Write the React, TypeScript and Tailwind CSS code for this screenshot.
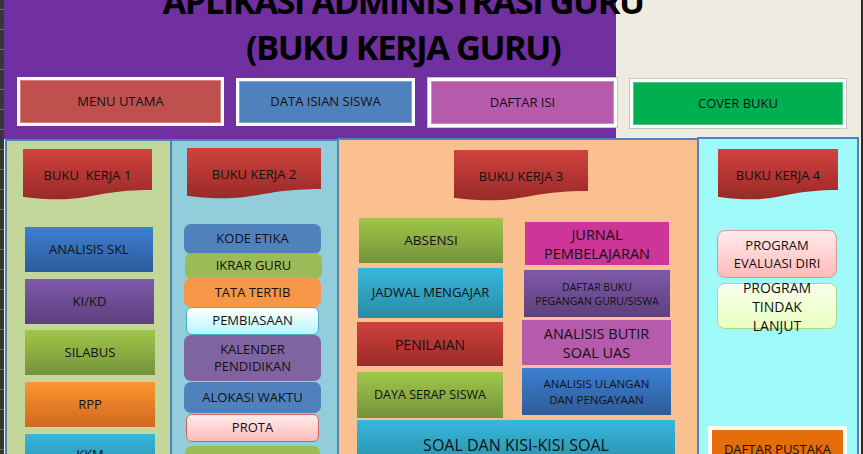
import React, { useId } from "react";

const fills = {
	blue: "bg-linear-to-b from-[#3d80d2] to-[#2c5c9a]",
	purple: "bg-linear-to-b from-[#8059ab] to-[#5c407c]",
	green: "bg-linear-to-b from-[#a0c747] to-[#75923b]",
	orange: "bg-linear-to-b from-[#ff9632] to-[#cf681e]",
	cyan: "bg-linear-to-b from-[#36b8dd] to-[#2a8ba5]",
	red: "bg-linear-to-b from-[#d0413d] to-[#9a2b29]",
};

type Fill = keyof typeof fills;

const Tile: React.FC<{ fill?: Fill; className: string; children: React.ReactNode }> = ({ fill, className, children }) => (
	<div
		className={`flex shrink-0 items-center justify-center text-center whitespace-pre-line ${fill ? fills[fill] : ""} ${className}`}
	>
		{children}
	</div>
);

// flowchart "document" shape used for the BUKU KERJA headings
const Banner: React.FC<{ label: string; className: string }> = ({ label, className }) => {
	const gid = "g" + useId().replace(/[^a-zA-Z0-9]/g, "");
	return (
		<div className={`relative flex h-[51px] shrink-0 items-center justify-center pt-[2px] text-[13px] ${className}`}>
			<svg className="absolute inset-0 h-full w-full" viewBox="0 0 100 100" preserveAspectRatio="none">
				<defs>
					<linearGradient id={gid} x1="0" y1="0" x2="0" y2="1">
						<stop offset="0" stopColor="#d1423e" />
						<stop offset="1" stopColor="#982a28" />
					</linearGradient>
				</defs>
				<path d="M0 0H100V80.2C50 80.2 50 110.7 0 93.4Z" fill={`url(#${gid})`} />
			</svg>
			<span className="relative whitespace-pre">{label}</span>
		</div>
	);
};

const App: React.FC = () => {
	return (
		<div className="flex h-[454px] w-[863px] overflow-hidden bg-[#eeece1] font-['Open_Sans',sans-serif] text-[#111]">
			<div className="h-full w-[4px] shrink-0 bg-[repeating-linear-gradient(to_bottom,#363636_0px,#363636_9px,#6b6b6b_9px,#6b6b6b_10px,#363636_10px,#363636_20px)]" />

			<div className="flex w-[857px] shrink-0 flex-col">
				<header className="flex h-[139px] shrink-0 flex-col bg-[linear-gradient(to_right,#7030a0_612px,#eeece1_612px)]">
					<h1 className="-mt-[22px] w-[798px] text-center text-[34.5px] leading-[46px] font-bold tracking-[-1.5px] text-black">
						APLIKASI ADMINISTRASI GURU
						<br />
						(BUKU KERJA GURU)
					</h1>
					<div className="mt-[7px] flex items-start pl-[13px] text-[13px]">
						<div className="h-[49px] w-[207px] border-[3px] border-white">
							<div className="flex h-full items-center justify-center border border-white/30 bg-[#c0504d]">MENU UTAMA</div>
						</div>
						<div className="mt-[1px] ml-[12px] h-[48px] w-[179px] border-[3px] border-white">
							<div className="flex h-full items-center justify-center border border-white/30 bg-[#4f81bd]">DATA ISIAN SISWA</div>
						</div>
						<div className="mt-[1px] ml-[13px] h-[49px] w-[189px] border-[3px] border-white outline-1 outline-[#c6c6c6]">
							<div className="flex h-full items-center justify-center border border-white/30 bg-[#b65aab]">DAFTAR ISI</div>
						</div>
						<div className="mt-[2px] ml-[13px] h-[49px] w-[216px] border-[3px] border-white outline-1 outline-[#c6c6c6]">
							<div className="flex h-full items-center justify-center border border-white/30 bg-[#00b050]">COVER BUKU</div>
						</div>
					</div>
				</header>

				<div className="-mt-[2px] flex items-start pl-[1px]">
					{/* buku kerja 1 */}
					<section className="mt-[2px] flex h-[330px] w-[165px] shrink-0 flex-col items-start border-t-2 border-l-2 border-[#4f81bd] bg-[#c4d79b] text-[13px]">
						<Banner label="BUKU  KERJA 1" className="mt-[8px] ml-[16px] w-[129px]" />
						<Tile fill="blue" className="mt-[27px] ml-[18px] h-[45px] w-[128px]">ANALISIS SKL</Tile>
						<Tile fill="purple" className="mt-[7px] ml-[18px] h-[45px] w-[129px]">KI/KD</Tile>
						<Tile fill="green" className="mt-[6px] ml-[18px] h-[45px] w-[130px]">SILABUS</Tile>
						<Tile fill="orange" className="mt-[7px] ml-[18px] h-[45px] w-[130px]">RPP</Tile>
						<Tile fill="cyan" className="mt-[7px] ml-[18px] h-[42px] w-[130px]">KKM</Tile>
					</section>

					{/* buku kerja 2 */}
					<section className="mt-[2px] flex h-[330px] w-[167px] shrink-0 flex-col items-start border-t-2 border-l-2 border-[#4f81bd] bg-[#92cddc] text-[13px]">
						<Banner label="BUKU KERJA 2" className="mt-[7px] ml-[15px] w-[134px]" />
						<Tile className="mt-[25px] ml-[12px] h-[30px] w-[137px] rounded-[7px] bg-[#4f81bd]">KODE ETIKA</Tile>
						<Tile className="-mt-[1px] ml-[13px] h-[26px] w-[137px] rounded-[7px] bg-[#9bbb59]">IKRAR GURU</Tile>
						<Tile className="-mt-[1px] ml-[12px] h-[29px] w-[137px] rounded-[7px] bg-[#f79646]">TATA TERTIB</Tile>
						<Tile className="ml-[14px] h-[28px] w-[133px] rounded-[6px] border border-[#4bacc6] bg-linear-to-b from-white to-[#b3f6ff]">
							PEMBIASAAN
						</Tile>
						<Tile className="ml-[12px] h-[46px] w-[137px] rounded-[7px] bg-[#8064a2] leading-[17px]">{"KALENDER\nPENDIDIKAN"}</Tile>
						<Tile className="mt-[1px] ml-[12px] h-[31px] w-[137px] rounded-[7px] bg-[#4f81bd]">ALOKASI WAKTU</Tile>
						<Tile className="mt-[1px] ml-[14px] h-[28px] w-[133px] rounded-[6px] border border-[#d26363] bg-linear-to-b from-[#ffeaea] to-[#ffbdbd]">
							PROTA
						</Tile>
						<Tile className="mt-[4px] ml-[13px] h-[40px] w-[135px] rounded-[7px] bg-[#9bbb59]">{""}</Tile>
					</section>

					{/* buku kerja 3 */}
					<section className="mt-[1px] flex h-[330px] w-[360px] shrink-0 flex-col items-start border-t-2 border-l-2 border-[#4f81bd] bg-[#fac090]">
						<Banner label="BUKU KERJA 3" className="mt-[10px] ml-[115px] w-[134px]" />
						<div className="flex items-start pl-[18px]">
							<div className="flex w-[146px] flex-col items-start">
								<Tile fill="green" className="mt-[17px] ml-[2px] h-[45px] w-[144px] text-[13.5px]">ABSENSI</Tile>
								<Tile fill="cyan" className="mt-[5px] ml-[1px] h-[50px] w-[145px] text-[13px]">JADWAL MENGAJAR</Tile>
								<Tile fill="red" className="mt-[4px] h-[44px] w-[146px] text-[14px]">PENILAIAN</Tile>
								<Tile fill="green" className="mt-[6px] h-[46px] w-[146px] text-[12.5px]">DAYA SERAP SISWA</Tile>
							</div>
							<div className="ml-[19px] flex w-[149px] flex-col items-start">
								<Tile className="mt-[21px] ml-[3px] h-[43px] w-[144px] bg-[#cd3599] text-[14.5px] leading-[19px]">
									{"JURNAL\nPEMBELAJARAN"}
								</Tile>
								<Tile fill="purple" className="mt-[5px] ml-[2px] h-[47px] w-[146px] text-[10.5px] leading-[14px]">
									{"DAFTAR BUKU\nPEGANGAN GURU/SISWA"}
								</Tile>
								<Tile className="mt-[3px] h-[45px] w-[149px] bg-[#b65aab] text-[14.5px] leading-[19px]">
									{"ANALISIS BUTIR\nSOAL UAS"}
								</Tile>
								<Tile fill="blue" className="mt-[3px] h-[47px] w-[149px] text-[11.5px] leading-[16px]">
									{"ANALISIS ULANGAN\nDAN PENGAYAAN"}
								</Tile>
							</div>
						</div>
						<Tile fill="cyan" className="mt-[2px] ml-[18px] h-[50px] w-[318px] text-[16px]">SOAL DAN KISI-KISI SOAL</Tile>
					</section>

					{/* buku kerja 4 */}
					<section className="flex h-[330px] w-[162px] shrink-0 flex-col items-start border-x-2 border-t-2 border-[#4f81bd] bg-[#a0fafa]">
						<Banner label="BUKU KERJA 4" className="mt-[10px] ml-[19px] w-[120px]" />
						<Tile className="mt-[30px] ml-[18px] h-[48px] w-[120px] rounded-[8px] border border-[#d99694] bg-linear-to-b from-[#ffebeb] to-[#ffbaba] text-[13px] leading-[18px]">
							{"PROGRAM\nEVALUASI DIRI"}
						</Tile>
						<Tile className="mt-[5px] ml-[18px] h-[46px] w-[120px] rounded-[8px] border border-[#b2d48b] bg-linear-to-b from-[#f9ffec] to-[#eaffbf] text-[14px] leading-[19px]">
							{"PROGRAM\nTINDAK\nLANJUT"}
						</Tile>
						<div className="mt-[97px] ml-[9px] h-[47px] w-[139px] shrink-0 border-[4px] border-white">
							<div className="flex h-full items-center justify-center bg-[#e46c0a] text-[13px]">DAFTAR PUSTAKA</div>
						</div>
					</section>
				</div>
			</div>

			<div className="h-full w-[2px] shrink-0 bg-[#2a2a2a]" />
		</div>
	);
};

export default App;
